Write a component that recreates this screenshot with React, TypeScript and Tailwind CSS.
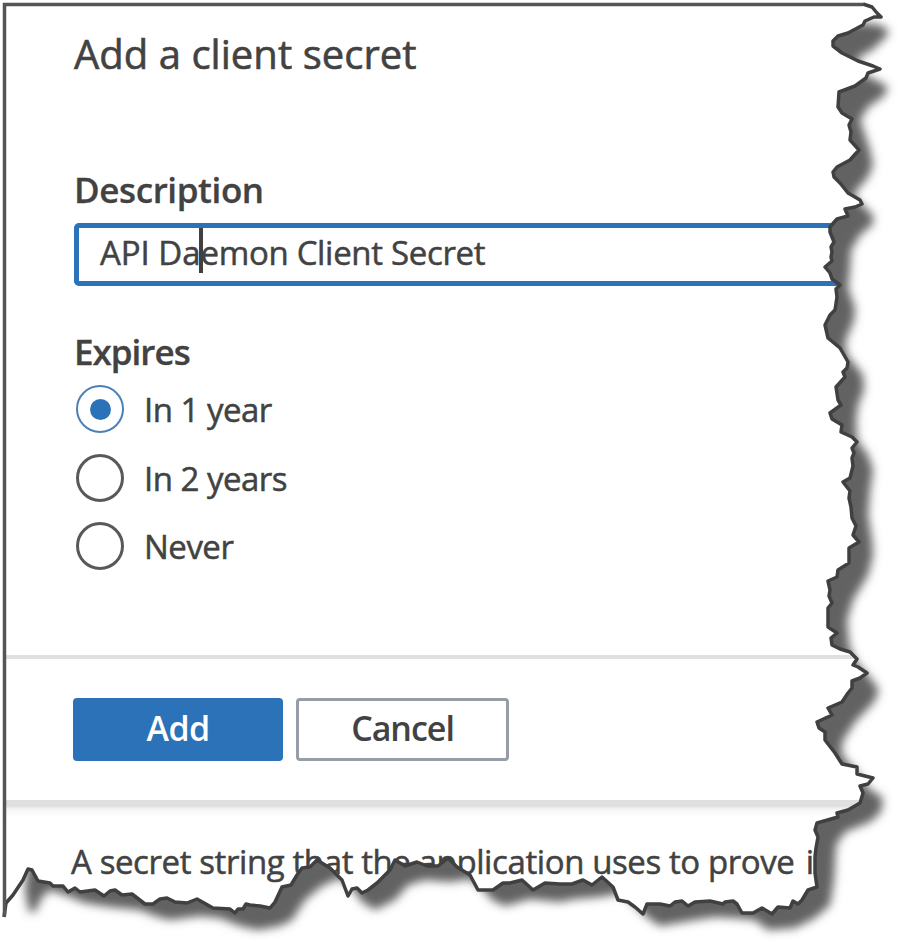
import React from "react";

const EDGE =
  "863,4 872,7 877,13 881,17 874,17 865,21 863,25 848,33 838,36 833,41 833,46 842,53 858,61 873,66 880,69 874,71 868,73 866,78 855,86 839,92 838,107 842,113 852,119 849,125 851,132 850,140 859,150 850,160 837,167 833,172 834,177 840,183 848,193 860,200 862,204 855,207 845,209 848,216 837,219 830,227 830,232 834,242 831,247 832,252 831,257 832,261 825,267 830,273 832,279 840,285 836,289 837,297 835,310 830,315 825,325 828,338 840,348 848,362 847,368 843,372 845,377 836,387 838,400 841,405 830,413 832,419 842,425 841,432 852,437 857,442 852,448 854,453 852,458 853,466 850,478 843,482 850,491 849,498 851,507 852,518 856,526 853,535 859,542 849,548 849,563 838,570 837,577 828,581 830,590 829,596 832,603 828,608 828,627 837,633 831,638 832,645 840,649 850,652 857,659 853,665 858,667 867,673 860,678 852,681 852,688 848,693 842,702 828,708 832,715 817,722 819,728 825,732 825,740 835,753 842,764 857,767 857,774 873,778 868,784 860,786 863,793 860,803 848,810 837,813 838,817 817,823 815,830 818,837 816,848 815,857 815,873 817,887 808,890 802,900 798,904 793,901 790,908 778,907 772,914 762,908 753,913 742,913 737,904 733,901 725,902 723,904 710,901 695,902 688,906 682,901 675,902 670,906 660,904 647,904 643,914 635,907 628,902 618,900 613,887 602,877 592,885 583,880 572,884 560,884 545,883 533,890 522,880 510,883 503,883 493,890 478,890 470,875 457,867 448,858 438,866 427,866 417,862 405,866 395,860 390,870 377,883 368,890 362,893 357,888 352,889 348,896 342,880 330,868 317,860 310,867 302,868 297,875 291,885 282,887 275,902 270,908 260,906 250,905 246,904 243,909 238,909 235,913 230,909 213,908 197,899 187,903 175,902 167,898 160,899 153,904 145,904 132,894 122,895 115,890 110,891 104,896 95,890 80,892 75,888 68,892 63,886 53,886 50,883 38,881 32,870 28,869 23,880 13,895 6,903 4,917";

const SHADOW =
  "800,20 876,24 888,29 887,36 872,50 857,58 866,76 876,80 888,87 884,96 868,107 860,120 866,138 870,150 873,165 868,177 853,195 862,205 873,215 873,224 860,235 851,250 850,270 848,288 855,308 854,320 845,342 847,355 863,375 864,390 858,405 856,420 857,440 868,455 873,470 870,490 868,515 872,540 873,555 868,575 853,600 847,620 849,645 856,662 868,675 879,690 874,702 855,722 842,742 842,755 855,770 868,788 883,798 881,812 870,822 845,832 836,845 834,880 830,905 815,918 795,928 768,930 755,920 735,918 715,917 695,920 660,926 648,918 635,905 622,893 600,897 575,899 560,902 530,899 505,906 492,900 482,888 470,879 450,882 425,880 408,885 395,900 375,910 362,902 352,888 340,878 322,886 305,900 292,920 280,926 258,930 240,926 220,918 200,916 170,920 155,916 140,910 110,907 85,903 65,895 50,890 42,897 35,912 29,912 25,890 28,860 800,800";

function TornEdge() {
  return (
    <svg className="pointer-events-none absolute inset-0" width="900" height="942" viewBox="0 0 900 942" aria-hidden="true">
      <defs>
        <clipPath id="outside">
          <path clipRule="evenodd" d={`M0,0H900V942H0Z M4,4L${EDGE.split(" ").join(" L")}Z`} />
        </clipPath>
        <filter id="soft" x="0" y="0" width="900" height="942" filterUnits="userSpaceOnUse">
          <feGaussianBlur stdDeviation="4.8" />
        </filter>
      </defs>
      <g clipPath="url(#outside)">
        <rect width="900" height="942" fill="#fff" />
        <polygon points={SHADOW} fill="#626264" filter="url(#soft)" />
      </g>
      <polyline points={EDGE} fill="none" stroke="#404040" strokeWidth="3.5" strokeLinejoin="round" />
      <path d="M4.5,916V4.5H863" fill="none" stroke="#555" strokeWidth="3.5" />
    </svg>
  );
}

function Radio({ label, checked = false }: { label: string; checked?: boolean }) {
  return (
    <label className="flex h-[68.5px] items-center gap-[20px]">
      <span
        className={
          checked
            ? "flex size-[48px] items-center justify-center rounded-full border-[2.5px] border-[#4b80b8]"
            : "flex size-[48px] items-center justify-center rounded-full border-3 border-[#595959]"
        }
      >
        {checked && <span className="size-[21px] rounded-full bg-[#2c72b8]" />}
      </span>
      <span className="pt-[1px] text-[33px] leading-none tracking-[-0.5px] [-webkit-text-stroke:0.5px]">{label}</span>
    </label>
  );
}

export default function App() {
  return (
    <div className="relative h-[942px] w-[900px] overflow-hidden bg-white font-['Open_Sans',sans-serif] whitespace-nowrap text-[#424242]">
      <main className="flex h-[655px] flex-col pl-[74px]">
        <h1 className="mt-[26px] h-[57px] text-[40px] leading-[56px] tracking-[0.03px] [-webkit-text-stroke:0.6px]">Add a client secret</h1>
        <h2 className="mt-[83px] h-[48px] text-[35px] leading-[48px] font-semibold tracking-[-0.4px] [-webkit-text-stroke:0.3px]">Description</h2>
        <div className="mt-[9px] flex h-[63px] items-center rounded-[5px] border-5 border-[#2c72b8] pl-[21px]">
          <span className="pb-[4px] text-[33px] leading-none tracking-[-0.05px] [-webkit-text-stroke:0.5px]">API Da</span>
          <span className="-mx-[2px] mb-[9px] h-[45px] w-[4px] bg-[#404040]" />
          <span className="pb-[4px] text-[33px] leading-none tracking-[-0.32px] [-webkit-text-stroke:0.5px]">emon Client Secret</span>
        </div>
        <h2 className="mt-[42px] h-[47px] text-[35px] leading-[48px] font-semibold tracking-[-1px] [-webkit-text-stroke:0.3px]">Expires</h2>
        <div className="flex flex-col pl-[2px]">
          <Radio label="In 1 year" checked />
          <Radio label="In 2 years" />
          <Radio label="Never" />
        </div>
      </main>
      <footer className="flex h-[149px] gap-[13px] border-t-4 border-[#e0e0e0] pt-[39px] pl-[73px]">
        <button className="h-[63px] w-[210px] rounded-[4px] bg-[#2c72b8] pb-[4px] text-[34px] leading-none font-semibold tracking-[-0.02em] text-white">Add</button>
        <button className="h-[63px] w-[213px] rounded-[4px] border-[3.5px] border-[#979da6] pb-[4px] text-[34px] leading-none font-semibold tracking-[-0.03em]">Cancel</button>
      </footer>
      <div className="-mt-[4px] h-[19px] bg-linear-to-b from-[#dfdfdf] from-30% via-[#f5f5f5] via-50% to-white to-90%" />
      <p className="mt-[19px] pl-[71px] text-[33px] leading-[48px] tracking-[-0.4px] [-webkit-text-stroke:0.5px]">
        A secret string that the application uses to prove <span className="ml-[3px]">i</span>
      </p>
      <TornEdge />
    </div>
  );
}
